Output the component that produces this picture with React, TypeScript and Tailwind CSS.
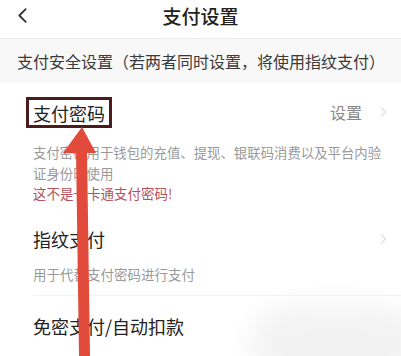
import React from 'react';

const Chevron = ({ className }: { className?: string }) => (
  <svg viewBox="0 0 10 16" className={className} fill="none" stroke="currentColor" strokeWidth={1.6} strokeLinecap="round" strokeLinejoin="round">
    <path d="M2 2l6 6-6 6" />
  </svg>
);

const App = (): React.ReactElement => {
  return (
    <div className="relative w-[401px] h-[356px] overflow-hidden bg-white text-[#222] font-['Noto_Sans_CJK_SC','Noto_Sans',sans-serif]">
      {/* 顶部导航 */}
      <div className="relative h-[39px] flex items-center justify-center border-b border-[#ececec]">
        <svg viewBox="0 0 10 16" className="absolute left-[17px] top-[7px] w-[11px] h-[17px] text-[#333]" fill="none" stroke="currentColor" strokeWidth={1.7} strokeLinecap="round" strokeLinejoin="round">
          <path d="M8 2L2 8l6 6" />
        </svg>
        <h1 className="text-[19px] font-medium leading-none -mt-[8px]">支付设置</h1>
      </div>

      {/* 分组标题 */}
      <div className="h-[44px] bg-[#f8f8f8] px-[17px] flex items-center text-[16px] text-[#3a3a3a]">
        支付安全设置（若两者同时设置，将使用指纹支付）
      </div>

      {/* 支付密码 */}
      <div className="pl-[26px] pr-[14px] pt-[14px]">
        <div className="flex items-center justify-between">
          <div className="border-[3px] border-[#4a1c1c] h-[31px] px-[4px] flex items-center text-[18px] leading-none">
            支付密码
          </div>
          <div className="flex items-center gap-[18px] text-[16px] text-[#888] -mt-[2px]">
            设置
            <Chevron className="w-[7px] h-[12px] text-[#ddd]" />
          </div>
        </div>
        <div className="pl-[7px] mt-[14px] text-[13.4px] leading-[21px] text-[#9a9a9a]">
          支付密码用于钱包的充值、提现、银联码消费以及平台内验证身份时使用
        </div>
        <div className="pl-[7px] text-[13.5px] leading-[18px] text-[#b5505e]">这不是一卡通支付密码!</div>
      </div>

      {/* 指纹支付 */}
      <div className="pl-[33px] pr-[14px] mt-[26px]">
        <div className="flex items-center justify-between text-[18px] leading-[22px]">
          指纹支付
          <Chevron className="w-[7px] h-[12px] text-[#ddd]" />
        </div>
        <div className="mt-[15px] text-[13.5px] leading-[18px] text-[#9a9a9a]">用于代替支付密码进行支付</div>
      </div>
      <div className="ml-[33px] mt-[12px] border-t border-[#f3f3f3]" />

      {/* 免密支付 */}
      <div className="pl-[33px] mt-[19px] text-[18px] leading-[22px]">免密支付/自动扣款</div>

      {/* 右下角淡灰阴影 */}
      <div className="absolute right-[-20px] bottom-[-30px] w-[170px] h-[80px] rounded-full bg-[#f2f2f2] blur-[14px]" />

      {/* 红色箭头 */}
      <svg className="absolute left-0 top-0 pointer-events-none" width="401" height="356" viewBox="0 0 401 356">
        <polygon points="76,150 87,150 90,356 79,356" fill="#e24a3b" />
        <polygon points="82,127 96,153 63,153" fill="#e24a3b" />
      </svg>
    </div>
  );
};

export default App;
